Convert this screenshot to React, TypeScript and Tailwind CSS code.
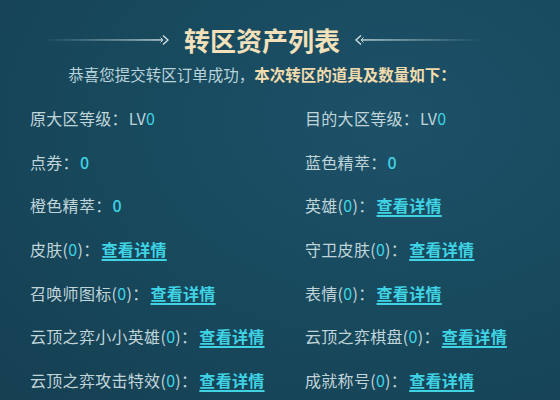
const FONT = { fontFamily: '"Noto Sans CJK SC", "Noto Sans", sans-serif' };

type Row = { label: string; value?: string; link?: boolean };

const LEFT: Row[] = [
  { label: "原大区等级：", value: "LV0" },
  { label: "点券：", value: "0" },
  { label: "橙色精萃：", value: "0" },
  { label: "皮肤(0)：", link: true },
  { label: "召唤师图标(0)：", link: true },
  { label: "云顶之弈小小英雄(0)：", link: true },
  { label: "云顶之弈攻击特效(0)：", link: true },
];

const RIGHT: Row[] = [
  { label: "目的大区等级：", value: "LV0" },
  { label: "蓝色精萃：", value: "0" },
  { label: "英雄(0)：", link: true },
  { label: "守卫皮肤(0)：", link: true },
  { label: "表情(0)：", link: true },
  { label: "云顶之弈棋盘(0)：", link: true },
  { label: "成就称号(0)：", link: true },
];

function Label({ text }: { text: string }) {
  // highlight the (0) count in cyan
  const m = text.match(/^(.*)\((\d+)\)(：)$/);
  if (!m) return <span>{text}</span>;
  return (
    <span>
      {m[1]}(<span className="text-[#3fd3e4]">{m[2]}</span>){m[3]}
    </span>
  );
}

function Item({ row }: { row: Row }) {
  const lv = row.value?.startsWith("LV");
  return (
    <div className="text-[16px] leading-[22px] text-[#c0d5da] whitespace-nowrap tracking-[0.3px]">
      <Label text={row.label} />
      {row.value && (
        <span className="ml-[1px]">
          {lv ? (
            <>
              <span>LV</span>
              <span className="text-[#3fd3e4]">0</span>
            </>
          ) : (
            <span className="text-[#3fd3e4] font-medium">{row.value}</span>
          )}
        </span>
      )}
      {row.link && (
        <a className="ml-[2px] font-bold text-[#3fd3e4] underline underline-offset-[3px] decoration-[1.5px] cursor-pointer">
          查看详情
        </a>
      )}
    </div>
  );
}

function Line({ flip }: { flip?: boolean }) {
  const id = flip ? "lg2" : "lg1";
  return (
    <svg width="130" height="14" viewBox="0 0 130 14" className={flip ? "-scale-x-100" : ""}>
      <defs>
        <linearGradient id={id} gradientUnits="userSpaceOnUse" x1="0" x2="121" y1="7" y2="7">
          <stop offset="0" stopColor="#9fc0c8" stopOpacity="0" />
          <stop offset="0.45" stopColor="#a9c6cc" stopOpacity="0.55" />
          <stop offset="1" stopColor="#dbe8e6" stopOpacity="1" />
        </linearGradient>
      </defs>
      <rect x="0" y="6.3" width="121" height="1.3" fill={`url(#${id})`} />
      <path d="M121 2.5 L126 7 L121 11.5" fill="none" stroke="#d9e6e4" strokeWidth="1.3" />
      <path d="M118.5 4.5 L121 7 L118.5 9.5" fill="none" stroke="#c7d9d9" strokeWidth="1" />
    </svg>
  );
}

export default function App() {
  return (
    <div
      style={FONT}
      className="w-[560px] h-[400px] overflow-hidden bg-[#184a5e] bg-[radial-gradient(ellipse_at_70%_30%,#1d5168_0%,#184a5e_45%,#163f52_100%)]"
    >
      <div className="w-[524px] flex flex-col items-center pt-[22px]">
        <div className="flex items-center gap-[12px]">
          <Line />
          <h1 className="text-[26px] leading-[36px] font-bold text-[#f2e0bb]">
            转区资产列表
          </h1>
          <Line flip />
        </div>
        <p className="mt-[5px] text-[15.5px] leading-[22px] text-[#b9d3da]">
          恭喜您提交转区订单成功，
          <span className="font-bold text-[#f1dbad]">本次转区的道具及数量如下：</span>
        </p>
      </div>
      <div className="mt-[22px] pl-[30px] grid grid-cols-[275px_1fr] gap-y-[21.7px]">
        {LEFT.map((l, i) => (
          <div key={i} className="contents">
            <Item row={l} />
            <Item row={RIGHT[i]} />
          </div>
        ))}
      </div>
    </div>
  );
}
